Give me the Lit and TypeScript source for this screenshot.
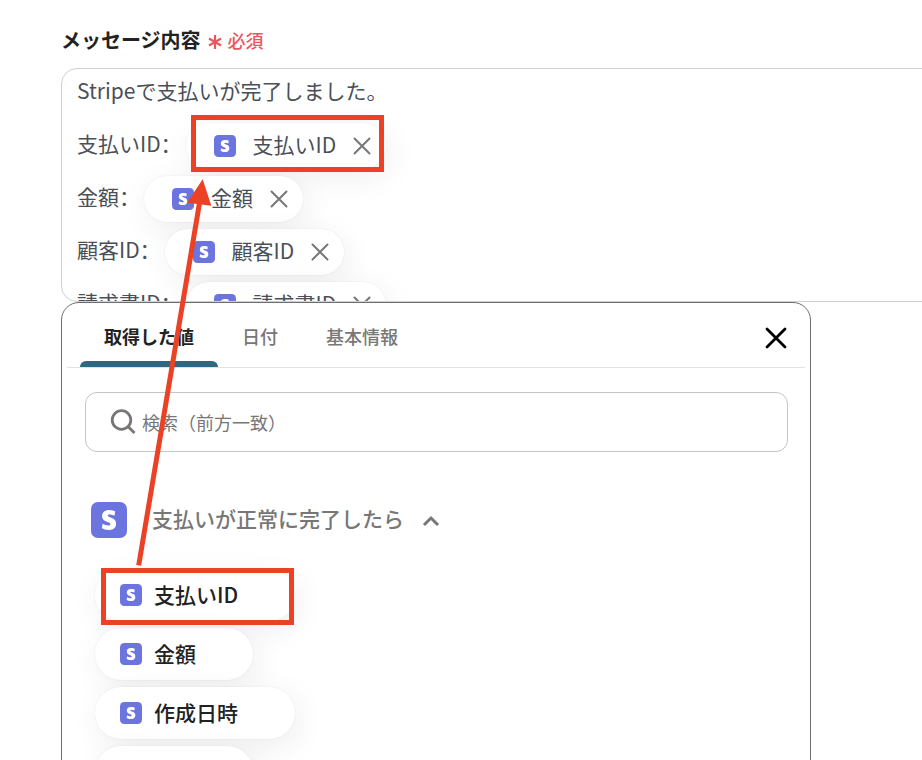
import { LitElement, html, svg, css } from "lit";
import { customElement, property, state } from "lit/decorators.js";

@customElement("service-icon")
class ServiceIcon extends LitElement {
  static styles = css`
    :host { display: block; flex: none; width: 22px; height: 22px; }
    :host([large]) { width: 36px; height: 36px; }
    svg { display: block; width: 100%; height: 100%; }
  `;
  render() {
    return html`<svg viewBox="0 0 36 36" aria-hidden="true">
      <rect width="36" height="36" rx="7" fill="#6b74df"></rect>
      <path transform="translate(8 8) scale(0.83)" fill="#fff" d="M13.976 9.15c-2.172-.806-3.356-1.426-3.356-2.409 0-.831.683-1.305 1.901-1.305 2.227 0 4.515.858 6.09 1.631l.89-5.494C18.252.975 15.697 0 12.165 0 9.667 0 7.589.654 6.104 1.872 4.56 3.147 3.757 4.992 3.757 7.218c0 4.039 2.467 5.76 6.476 7.219 2.585.92 3.445 1.574 3.445 2.583 0 .98-.84 1.545-2.354 1.545-1.875 0-4.965-.921-6.99-2.109l-.9 5.555C5.175 22.99 8.385 24 11.714 24c2.641 0 4.843-.624 6.328-1.813 1.664-1.305 2.525-3.236 2.525-5.732 0-4.128-2.524-5.851-6.594-7.305h.003z"></path>
    </svg>`;
  }
}

@customElement("value-token")
class ValueToken extends LitElement {
  @property() label = "";
  static styles = css`
    :host {
      display: inline-flex; align-items: center; box-sizing: border-box; height: 46px;
      padding: 0 14px 0 28px; border-radius: 23px; background: #fff;
      box-shadow: 0 0 2px rgba(0, 0, 0, 0.08), 4px 8px 32px rgba(0, 0, 0, 0.07);
    }
    .name { margin: 0 16px 0 17px; padding-bottom: 3px; white-space: nowrap; }
    button { display: block; padding: 0; border: 0; background: none; cursor: pointer; }
    svg { display: block; width: 20px; height: 20px; }
  `;
  render() {
    return html`<service-icon></service-icon>
      <span class="name">${this.label}</span>
      <button aria-label="${this.label}を削除">
        <svg viewBox="0 0 20 20" fill="none" stroke="#777" stroke-width="2" stroke-linecap="round">
          <path d="M2.500 2.500 17.500 17.500M17.500 2.500 2.500 17.500"></path>
        </svg>
      </button>`;
  }
}

@customElement("app-root")
class AppRoot extends LitElement {
  @state() tab = 0;

  private tabs = ["取得した値", "日付", "基本情報"];
  private fields = ["支払いID", "金額", "顧客ID", "請求書ID"];
  private values = ["支払いID", "金額", "作成日時", "通貨"];

  static styles = css`
    :host {
      display: block; position: relative; box-sizing: border-box; height: 100vh; overflow: hidden;
      padding: 24px 0 0 61px; background: #fff; color: #4a4f57;
      font-family: "Noto Sans CJK JP", sans-serif; font-size: 21px; line-height: 32px;
    }
    button, input { font: inherit; color: inherit; }
    button { cursor: pointer; }
    .heading { display: flex; align-items: center; height: 32px; margin: 0 0 12px; font-size: 20px; font-weight: 700; color: #222; }
    .required { display: flex; align-items: center; gap: 6px; margin-left: 7px; font-size: 18px; font-weight: 500; color: #ee565f; }
    .required svg { width: 14px; height: 14px; margin-top: 3px; }
    .editor {
      box-sizing: border-box; height: 234px; margin-right: -24px; padding: 0 15px; overflow: hidden;
      border: 1px solid #cdd1d6; border-radius: 16px; outline: none;
    }
    .line { display: flex; align-items: center; gap: 4px; height: 53px; }
    .line:first-child { height: 46px; margin-bottom: 4px; }
    .copy { padding-bottom: 5px; white-space: nowrap; }
    .colon { font-family: "Noto Sans CJK SC", sans-serif; }

    .picker {
      position: relative; box-sizing: border-box; width: min(750px, 100% - 24px); height: 600px;
      border: 1px solid #6e6e6e; border-radius: 18px; background: #fff;
    }
    .tabs { display: flex; align-items: stretch; height: 64px; margin: 0 5px; padding: 0 16px 0 13px; border-bottom: 1px solid #e2e2e2; }
    .tab {
      padding: 6px 24px 0; border: 0; background: none; font-size: 18px; font-weight: 500; color: #777;
      display: flex; flex-direction: column; justify-content: space-between; align-items: center;
    }
    .tab span { margin: 11px 0 0; }
    .tab.active { font-weight: 700; color: #222; }
    .tab.active::after { content: ""; align-self: stretch; height: 6px; margin: 0 -24px; border-radius: 6px 6px 0 0; background: #2f6680; }
    .close { margin-left: auto; padding: 6px 0 0; border: 0; background: none; }
    .close svg { display: block; width: 26px; height: 26px; }
    .search {
      display: flex; align-items: center; gap: 6px; box-sizing: border-box; height: 60px;
      margin: 24px 22px 0 23px; padding: 0 24px; border: 1px solid #c4c4c4; border-radius: 12px;
    }
    .search svg { flex: none; width: 26px; height: 26px; }
    .search input { flex: 1; min-width: 0; height: 32px; padding: 0; border: 0; outline: 0; background: none; font-size: 18px; }
    .search input::placeholder { color: #777; opacity: 1; }
    .group { display: flex; align-items: center; margin: 50px 0 0 29px; padding: 0; border: 0; background: none; color: #777; font-weight: 500; }
    .group span { margin: 0 18px 0 25px; padding-bottom: 4px; }
    .group svg { width: 18px; height: 18px; }
    .values { display: flex; flex-direction: column; align-items: flex-start; gap: 7px; margin: 31px 0 0 33px; padding: 0; list-style: none; }
    .value {
      display: flex; align-items: center; gap: 12px; height: 52px; padding: 0 57px 0 25px;
      border: 0; border-radius: 26px; background: #fff; color: #222; font-weight: 500;
      box-shadow: 0 0 2px rgba(0, 0, 0, 0.08), 4px 8px 32px rgba(0, 0, 0, 0.07);
    }
    .value span { padding-bottom: 3px; }
    .notes { position: absolute; left: 0; top: 0; width: 922px; height: 760px; pointer-events: none; }
  `;

  render() {
    return html`
      <h2 class="heading" id="message-label">メッセージ内容
        <span class="required">
          <svg viewBox="0 0 14 14" stroke="#ee565f" stroke-width="2.2" aria-hidden="true">
            <path d="M7 0V14M1 3.500 13 10.500M13 3.500 1 10.500"></path>
          </svg>必須</span>
      </h2>
      <div class="editor" role="textbox" aria-multiline="true" aria-labelledby="message-label" contenteditable="true" spellcheck="false">
        <div class="line"><span class="copy">Stripeで支払いが完了しました。</span></div>
        ${this.fields.map((f) => html`<div class="line"><span class="copy">${f}<span class="colon">：</span></span><value-token contenteditable="false" .label=${f}></value-token></div>`)}
      </div>
      <section class="picker">
        <div class="tabs" role="tablist">
          ${this.tabs.map((t, i) => html`<button class="tab ${i === this.tab ? "active" : ""}" role="tab" aria-selected=${i === this.tab} @click=${() => (this.tab = i)}><span>${t}</span></button>`)}
          <button class="close" aria-label="閉じる">
            <svg viewBox="0 0 26 26" fill="none" stroke="#000" stroke-width="2.8" stroke-linecap="round"><path d="M4 4 22 22M22 4 4 22"></path></svg>
          </button>
        </div>
        <label class="search">
          <svg viewBox="0 0 26 26" fill="none" stroke="#777" stroke-width="2.8" aria-hidden="true">
            <circle cx="11.500" cy="11" r="9.300"></circle><path d="M18 17.500 24.500 24"></path>
          </svg>
          <input type="search" aria-label="検索" placeholder="検索（前方一致）" />
        </label>
        <button class="group" aria-expanded="true">
          <service-icon large></service-icon>
          <span>支払いが正常に完了したら</span>
          <svg viewBox="0 0 18 18" fill="none" stroke="#777" stroke-width="3" aria-hidden="true"><path d="M2 14 9 7 16 14"></path></svg>
        </button>
        <ul class="values">
          ${this.values.map((v) => html`<li><button class="value"><service-icon></service-icon><span>${v}</span></button></li>`)}
        </ul>
      </section>
      <svg class="notes" viewBox="0 0 922 760" aria-hidden="true">
        ${svg`<g fill="none" stroke="#eb4125" stroke-width="5">
          <rect x="193.500" y="117.500" width="188" height="52"></rect>
          <rect x="103.500" y="570.500" width="188" height="52"></rect>
          <path d="M138.700 565.300 199.500 203"></path>
        </g>
        <path fill="#eb4125" d="M202.700 179.300 187 202.700 211.300 205.700z"></path>`}
      </svg>`;
  }
}
